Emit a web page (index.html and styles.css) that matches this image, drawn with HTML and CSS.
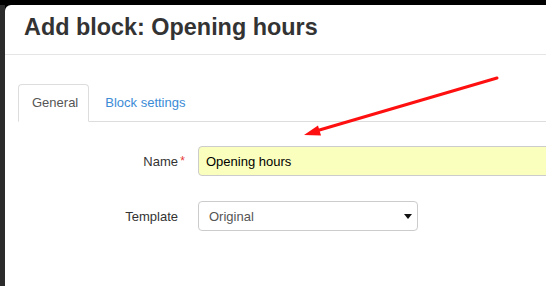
FILE: index.html
```html
<!DOCTYPE html>
<html lang="en">
<head>
    <meta charset="UTF-8">
    <title>Add block: Opening hours</title>
    <link rel="stylesheet" href="styles.css">
</head>
<body>
    <div class="screen">
        <div class="side-strip"></div>

        <div class="modal">
            <div class="modal-header">
                <h1>Add block: Opening hours</h1>
            </div>

            <div class="modal-body">
                <ul class="nav-tabs">
                    <li class="tab active">General</li>
                    <li class="tab"><a href="#">Block settings</a></li>
                </ul>

                <div class="form">
                    <div class="form-row">
                        <label class="form-label" for="name">Name<span class="required">*</span></label>
                        <input class="form-input autofilled" id="name" type="text" value="Opening hours">
                    </div>
                    <div class="form-row">
                        <label class="form-label" for="template">Template</label>
                        <div class="select-wrap">
                            <div class="form-select" id="template">Original</div>
                        </div>
                    </div>
                </div>
            </div>
        </div>
    </div>

    <!-- annotation arrow drawn over the screenshot -->
    <svg class="annotation" width="546" height="286" viewBox="0 0 546 286">
        <line x1="497" y1="78" x2="316" y2="131" stroke="#ff1010" stroke-width="3" stroke-linecap="round"/>
        <polygon points="304,135 321,135.5 318,125.5" fill="#ff1010"/>
    </svg>
</body>
</html>
```

FILE: styles.css
```css
* {
    margin: 0;
    padding: 0;
    box-sizing: border-box;
}

body {
    width: 546px;
    height: 286px;
    overflow: hidden;
    background: #000;
    padding-top: 5px;
    font-family: "Liberation Sans", Arial, sans-serif;
    color: #333;
    position: relative;
}

.screen {
    display: flex;
    height: 100%;
}

.side-strip {
    width: 5px;
    flex-shrink: 0;
    background: #2b2b2b;
}

.modal {
    flex: 1;
    background: #fff;
    border-radius: 6px 0 0 0;
}

.modal-header {
    padding: 9px 19px 14px;
    border-bottom: 1px solid #e5e5e5;
}

.modal-header h1 {
    font-size: 23.4px;
    line-height: 26px;
    font-weight: 700;
    color: #333;
}

.modal-body {
    padding: 29px 0 0 13px;
}

.nav-tabs {
    list-style: none;
    display: flex;
    border-bottom: 1px solid #ddd;
}

.tab {
    font-size: 13px;
    line-height: 18px;
    padding: 9px 10px 9px 13px;
    margin-right: 2px;
    border: 1px solid transparent;
    border-radius: 4px 4px 0 0;
    margin-bottom: -1px;
}

.tab.active {
    color: #555;
    background: #fff;
    border-color: #ddd;
    border-bottom-color: #fff;
}

.tab a {
    color: #3b8bd6;
    text-decoration: none;
}

.form {
    padding-top: 24px;
    display: flex;
    flex-direction: column;
    gap: 25px;
}

.form-row {
    display: flex;
    align-items: center;
}

.form-label {
    width: 180px;
    padding-right: 20px;
    text-align: right;
    font-size: 13px;
    color: #333;
    position: relative;
}

.required {
    position: absolute;
    right: 13px;
    top: 0;
    color: #e53935;
    font-size: 12px;
}

.form-input,
.form-select {
    height: 30px;
    border: 1px solid #ccc;
    border-radius: 4px;
    font-family: inherit;
    font-size: 13px;
}

.form-input {
    width: 400px;
    padding: 0 7px;
    color: #000;
    outline: none;
}

.form-input.autofilled {
    background: #faffbd;
}

.select-wrap {
    position: relative;
    width: 220px;
}

.form-select {
    display: flex;
    align-items: center;
    padding: 0 10px;
    color: #555;
    background: #fff;
}

.select-wrap::after {
    content: '';
    position: absolute;
    right: 6px;
    top: 13px;
    border-left: 4px solid transparent;
    border-right: 4px solid transparent;
    border-top: 5px solid #111;
}

.annotation {
    position: absolute;
    top: 0;
    left: 0;
    pointer-events: none;
}
```
